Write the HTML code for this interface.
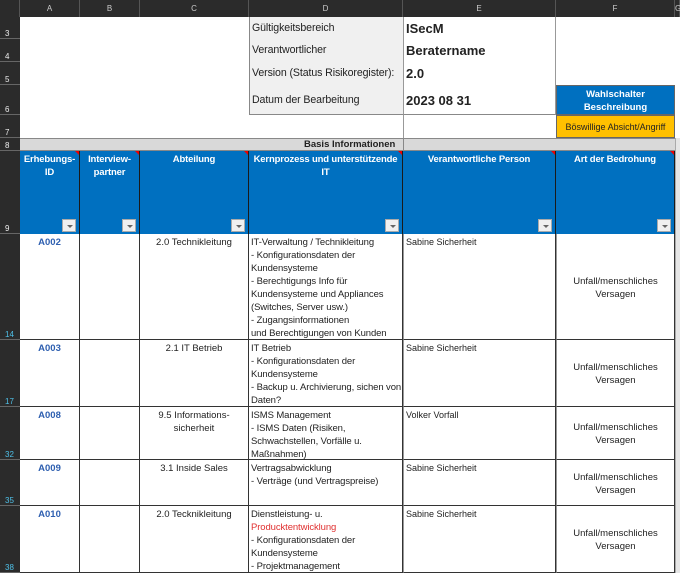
<!DOCTYPE html>
<html><head><meta charset="utf-8"><style>
*{margin:0;padding:0;box-sizing:border-box}
body{width:680px;height:573px;overflow:hidden;background:#fff;position:relative;font-family:"Liberation Sans",sans-serif;font-size:9.5px;color:#222;letter-spacing:0}
.a{position:absolute}
.hdr{background:#2b2b2b;color:#ccc;font-size:8px;text-align:center;line-height:17px;top:0;height:17px;border-right:1px solid #555}
.rn{background:#2b2b2b;left:0;width:20px;color:#eee;font-size:8px;padding-left:5px;display:flex;align-items:flex-end;border-bottom:1px solid #666}
.rn.c{color:#4fc1e9}
.bh{background:#0070c0;color:#fff;font-weight:bold;text-align:center;line-height:13px;padding-top:2px;border-right:1px solid #1a1a1a;font-size:9.5px;letter-spacing:-0.15px;white-space:nowrap}
.bh::after{content:"";position:absolute;right:0;top:0;border-top:4px solid #e00;border-left:4px solid transparent}
.dd{position:absolute;bottom:2px;right:3px;width:14px;height:13px;background:#f0f0f0;border:1px solid #aaa}
.dd::after{content:"";position:absolute;left:4px;top:5px;border-top:3px solid #666;border-left:3px solid transparent;border-right:3px solid transparent}
.cell{border-right:1px solid #333;border-bottom:1px solid #333;line-height:13px;padding:2px 2px 0;white-space:nowrap;overflow:hidden}
.k{letter-spacing:-0.1px}
.id{color:#2e5fb0;text-align:center;font-weight:bold;font-size:9.5px}
.ctr{text-align:center}
.f{display:flex;align-items:center;justify-content:center;text-align:center}
.p{font-size:9px}
.t{font-size:9.5px}
</style></head><body>
<div class="a hdr" style="left:0;width:20px;"></div>
<div class="a hdr" style="left:20px;width:60px">A</div>
<div class="a hdr" style="left:80px;width:60px">B</div>
<div class="a hdr" style="left:140px;width:109px">C</div>
<div class="a hdr" style="left:249px;width:154px">D</div>
<div class="a hdr" style="left:403px;width:153px">E</div>
<div class="a hdr" style="left:556px;width:119px">F</div>
<div class="a hdr" style="left:675px;width:5px">G</div>

<div class="a rn" style="top:17px;height:22px">3</div>
<div class="a rn" style="top:39px;height:23px">4</div>
<div class="a rn" style="top:62px;height:23px">5</div>
<div class="a rn" style="top:85px;height:30px">6</div>
<div class="a rn" style="top:115px;height:23px">7</div>
<div class="a rn" style="top:138px;height:13px">8</div>
<div class="a rn" style="top:151px;height:83px">9</div>
<div class="a rn c" style="top:234px;height:106px">14</div>
<div class="a rn c" style="top:340px;height:67px">17</div>
<div class="a rn c" style="top:407px;height:53px">32</div>
<div class="a rn c" style="top:460px;height:46px">35</div>
<div class="a rn c" style="top:506px;height:67px">38</div>

<div class="a" style="left:249px;top:17px;width:154px;height:98px;background:#f0f0f0;border-left:1px solid #888;border-bottom:1px solid #888;font-size:10.6px;letter-spacing:-0.1px;line-height:13px;white-space:nowrap">
<div class="a" style="left:2px;top:5px">Gültigkeitsbereich</div>
<div class="a" style="left:2px;top:27px">Verantwortlicher</div>
<div class="a" style="left:2px;top:50px">Version (Status Risikoregister):</div>
<div class="a" style="left:2px;top:77px">Datum der Bearbeitung</div>
</div>
<div class="a" style="left:403px;top:17px;width:153px;height:98px;border-left:1px solid #999;border-right:1px solid #999;border-bottom:1px solid #888;font-weight:bold;font-size:13px;letter-spacing:0">
<div class="a" style="left:2px;top:4px">ISecM</div>
<div class="a" style="left:2px;top:26px">Beratername</div>
<div class="a" style="left:2px;top:49px">2.0</div>
<div class="a" style="left:2px;top:76px">2023 08 31</div>
</div>
<div class="a" style="left:403px;top:115px;width:153px;height:23px;border-left:1px solid #999"></div>
<div class="a" style="left:556px;top:85px;width:119px;height:30px;background:#0070c0;color:#fff;font-weight:bold;text-align:center;line-height:13px;padding-top:2px;border:1px solid #666;font-size:9.5px">Wahlschalter<br>Beschreibung</div>
<div class="a f" style="left:556px;top:115px;width:119px;height:23px;background:#ffc000;border:1px solid #666;font-size:9px">Böswillige Absicht/Angriff</div>

<div class="a" style="left:20px;top:138px;width:655px;height:13px;background:#d9d9d9;border-top:1px solid #888;border-bottom:1px solid #888"></div>
<div class="a" style="left:403px;top:138px;width:1px;height:13px;background:#888"></div>
<div class="a" style="left:304px;top:138px;font-weight:bold;line-height:13px;font-size:9.5px">Basis Informationen</div>
<div class="a" style="left:675px;top:138px;width:5px;height:435px;background:#e6e6e6;border-left:1px solid #aaa"></div>

<div class="a bh" style="left:20px;top:151px;width:60px;height:83px">Erhebungs-<br>ID<div class="dd"></div></div>
<div class="a bh" style="left:80px;top:151px;width:60px;height:83px">Interview-<br>partner<div class="dd"></div></div>
<div class="a bh" style="left:140px;top:151px;width:109px;height:83px">Abteilung<div class="dd"></div></div>
<div class="a bh" style="left:249px;top:151px;width:154px;height:83px">Kernprozess und unterstützende<br>IT<div class="dd"></div></div>
<div class="a bh" style="left:403px;top:151px;width:153px;height:83px">Verantwortliche Person<div class="dd"></div></div>
<div class="a bh" style="left:556px;top:151px;width:119px;height:83px">Art der Bedrohung<div class="dd"></div></div>

<div class="a cell id" style="left:20px;top:234px;width:60px;height:106px">A002</div>
<div class="a cell" style="left:80px;top:234px;width:60px;height:106px"></div>
<div class="a cell ctr" style="left:140px;top:234px;width:109px;height:106px">2.0 Technikleitung</div>
<div class="a cell k" style="left:249px;top:234px;width:154px;height:106px">IT-Verwaltung / Technikleitung<br>- Konfigurationsdaten der<br>Kundensysteme<br>- Berechtigungs Info für<br>Kundensysteme und Appliances<br>(Switches, Server usw.)<br>- Zugangsinformationen<br>und Berechtigungen von Kunden</div>
<div class="a cell p" style="left:403px;top:234px;width:153px;height:106px;border-left:1px solid #999">Sabine Sicherheit</div>
<div class="a cell f t" style="left:556px;top:234px;width:119px;height:106px;border-left:1px solid #999">Unfall/menschliches<br>Versagen</div>

<div class="a cell id" style="left:20px;top:340px;width:60px;height:67px">A003</div>
<div class="a cell" style="left:80px;top:340px;width:60px;height:67px"></div>
<div class="a cell ctr" style="left:140px;top:340px;width:109px;height:67px">2.1 IT Betrieb</div>
<div class="a cell k" style="left:249px;top:340px;width:154px;height:67px">IT Betrieb<br>- Konfigurationsdaten der<br>Kundensysteme<br>- Backup u. Archivierung, sichen von<br>Daten?</div>
<div class="a cell p" style="left:403px;top:340px;width:153px;height:67px;border-left:1px solid #999">Sabine Sicherheit</div>
<div class="a cell f t" style="left:556px;top:340px;width:119px;height:67px;border-left:1px solid #999">Unfall/menschliches<br>Versagen</div>

<div class="a cell id" style="left:20px;top:407px;width:60px;height:53px">A008</div>
<div class="a cell" style="left:80px;top:407px;width:60px;height:53px"></div>
<div class="a cell ctr" style="left:140px;top:407px;width:109px;height:53px">9.5 Informations-<br>sicherheit</div>
<div class="a cell k" style="left:249px;top:407px;width:154px;height:53px">ISMS Management<br>- ISMS Daten (Risiken,<br>Schwachstellen, Vorfälle u.<br>Maßnahmen)</div>
<div class="a cell p" style="left:403px;top:407px;width:153px;height:53px;border-left:1px solid #999">Volker Vorfall</div>
<div class="a cell f t" style="left:556px;top:407px;width:119px;height:53px;border-left:1px solid #999">Unfall/menschliches<br>Versagen</div>

<div class="a cell id" style="left:20px;top:460px;width:60px;height:46px">A009</div>
<div class="a cell" style="left:80px;top:460px;width:60px;height:46px"></div>
<div class="a cell ctr" style="left:140px;top:460px;width:109px;height:46px">3.1 Inside Sales</div>
<div class="a cell k" style="left:249px;top:460px;width:154px;height:46px">Vertragsabwicklung<br>- Verträge (und Vertragspreise)</div>
<div class="a cell p" style="left:403px;top:460px;width:153px;height:46px;border-left:1px solid #999">Sabine Sicherheit</div>
<div class="a cell f t" style="left:556px;top:460px;width:119px;height:46px;border-left:1px solid #999">Unfall/menschliches<br>Versagen</div>

<div class="a cell id" style="left:20px;top:506px;width:60px;height:67px">A010</div>
<div class="a cell" style="left:80px;top:506px;width:60px;height:67px"></div>
<div class="a cell ctr" style="left:140px;top:506px;width:109px;height:67px">2.0 Tecknikleitung</div>
<div class="a cell k" style="left:249px;top:506px;width:154px;height:67px">Dienstleistung- u.<br><span style="color:#e03030">Producktentwicklung</span><br>- Konfigurationsdaten der<br>Kundensysteme<br>- Projektmanagement</div>
<div class="a cell p" style="left:403px;top:506px;width:153px;height:67px;border-left:1px solid #999">Sabine Sicherheit</div>
<div class="a cell f t" style="left:556px;top:506px;width:119px;height:67px;border-left:1px solid #999">Unfall/menschliches<br>Versagen</div>
</body></html>
